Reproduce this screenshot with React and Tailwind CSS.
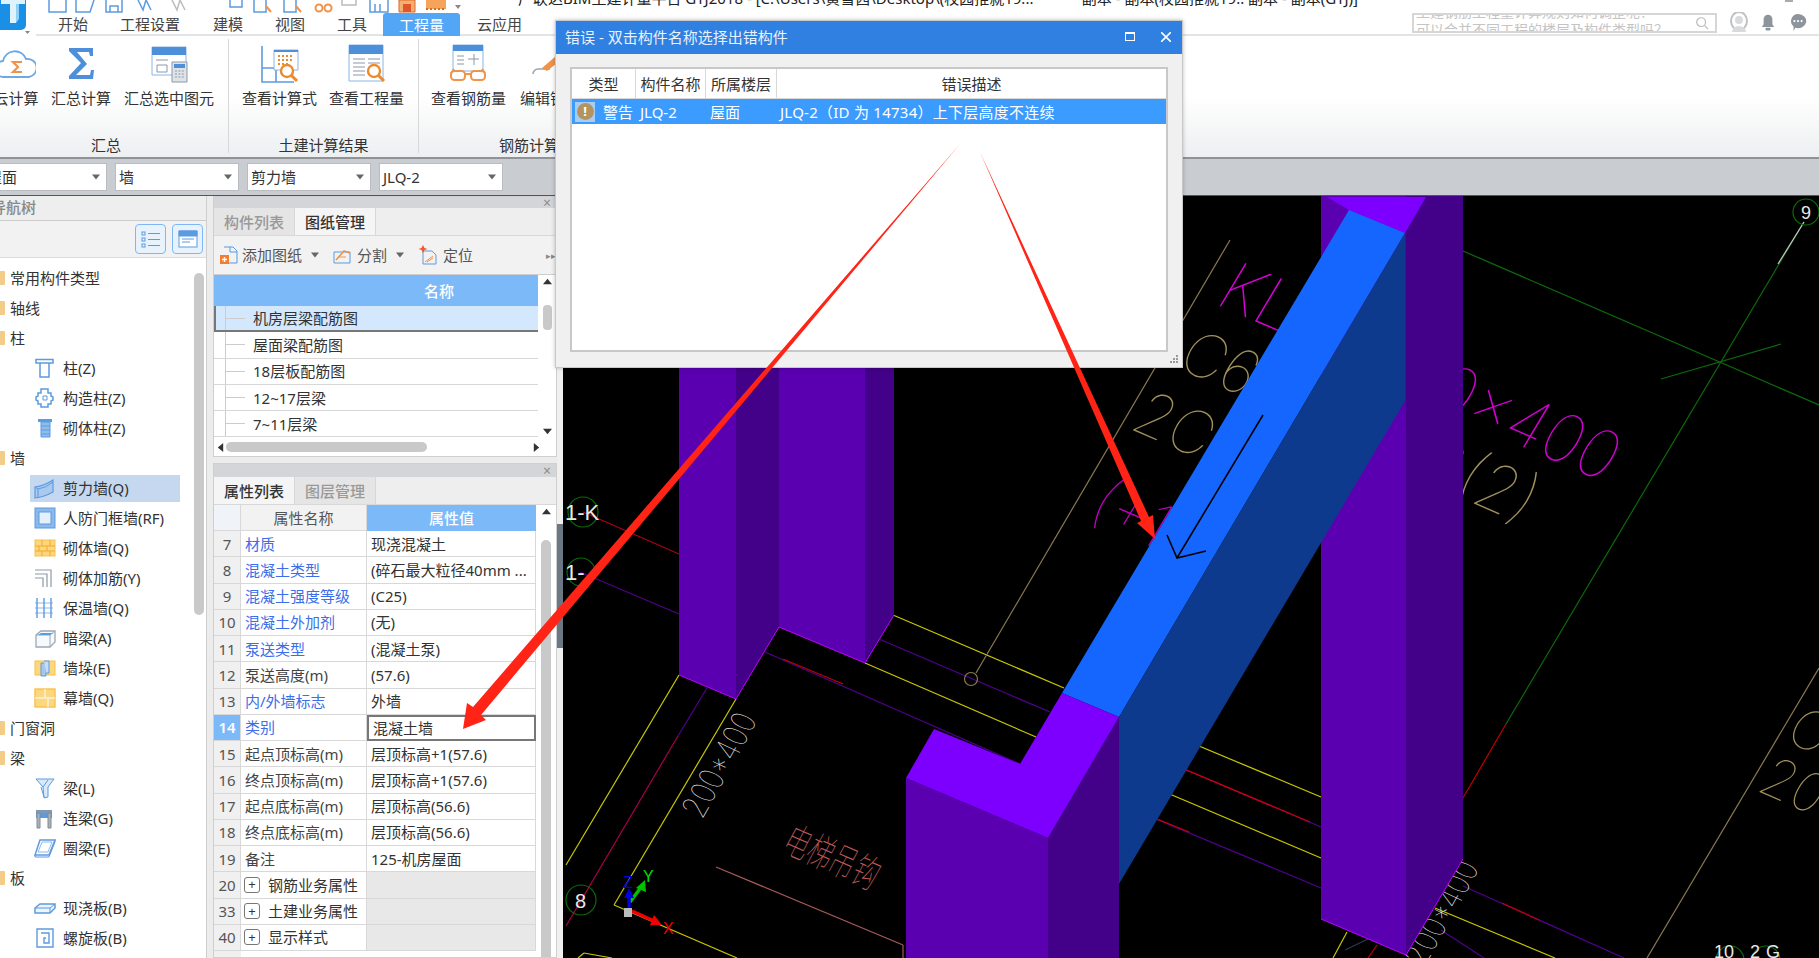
import React from 'react';

const Tri = ({ dir, className }) => {
  const pts = { up: '0,8 5,2 10,8', down: '0,2 5,8 10,2', left: '8,0 2,5 8,10', right: '2,0 8,5 2,10' };
  return (
    <svg viewBox="0 0 10 10" className={className}>
      <polygon points={pts[dir]} fill="currentColor" />
    </svg>
  );
};

const Caret = () => <Tri dir="down" className="w-[8px] h-[8px] text-[#666]" />;

const I = ({ children }) => (
  <svg viewBox="0 0 22 22" fill="none" className="w-[22px] h-[22px] shrink-0">
    {children}
  </svg>
);

const blue = '#5b9be0';
const amber = '#f8c14e';

const treeIcons = {
  zhu: (
    <I>
      <path d="M2 2.5h17v3.5H2zM6 6h9v14H6z" stroke={blue} strokeWidth="1.5" />
    </I>
  ),
  gouzao: (
    <I>
      <path d="M7 2h7v4h3v3l2 1v3l-2 1v3h-3v3H7v-3H4v-3l-2-1v-3l2-1V6h3z" stroke={blue} strokeWidth="1.5" />
      <path d="M9 9h4v4H9z" stroke={blue} />
    </I>
  ),
  qizhu: (
    <I>
      <path d="M4 2h14v3H4z" fill={blue} />
      <path d="M7 5h9v15H7z" fill="#8fbcec" stroke={blue} />
      <path d="M7 9h9M7 13h9M7 17h9" stroke={blue} />
    </I>
  ),
  jianli: (
    <I>
      <path d="M1 10 Q10 9 19 3v12Q10 20 1 21z" fill="#a9c9ee" stroke={blue} strokeWidth="1.2" />
      <path d="M1 10l3 2v9M4 12Q12 11 19 5" stroke={blue} />
    </I>
  ),
  renfang: (
    <I>
      <rect x="1" y="1" width="20" height="20" fill="#8db8ea" stroke={blue} />
      <rect x="5" y="5" width="12" height="12" fill="#e6f0fb" stroke={blue} />
    </I>
  ),
  qiqiang: (
    <I>
      <rect x="1" y="3" width="20" height="16" fill="#fdd77e" stroke={amber} />
      <path d="M1 9h20M1 14h20M8 3v6M16 3v6M5 9v5M13 9v5M8 14v5M16 14v5" stroke="#f3a92b" />
    </I>
  ),
  jiajin: (
    <I>
      <path d="M1 3h16v17M1 7h12v13M1 11h8v9" stroke="#8d99a6" strokeWidth="1.2" />
    </I>
  ),
  baowen: (
    <I>
      <path d="M3 1v20M10 1v20M17 1v20" stroke={blue} strokeWidth="1.4" />
      <path d="M1 6h18M1 11h18M1 16h18" stroke={blue} strokeWidth="0.7" />
    </I>
  ),
  anliang: (
    <I>
      <path d="M2 8l5-4h14v11l-5 5H2z" fill="#f7fafd" stroke="#9aa8b7" strokeWidth="1.3" />
      <path d="M2 8h14v12M16 8l5-4" stroke="#9aa8b7" />
      <path d="M7 6h12l-3 2H4z" fill={blue} />
    </I>
  ),
  duo: (
    <I>
      <rect x="1" y="4" width="20" height="14" fill="#fdd77e" stroke={amber} />
      <path d="M7 6h5v13H7z" fill="#a4c7ee" stroke={blue} />
      <path d="M10 4h5v12h-3" fill="#c6dcf4" stroke={blue} />
    </I>
  ),
  mu: (
    <I>
      <rect x="1" y="2" width="20" height="18" fill="#fdd77e" stroke={amber} strokeWidth="1.4" />
      <path d="M1 11h20M11 2v9M14 11v9" stroke="#f9f2dc" strokeWidth="1.4" />
    </I>
  ),
  liang: (
    <I>
      <path d="M2 2h18l-6 8v10l-4 1-1-11z" fill="#dbe8f8" stroke={blue} />
      <path d="M7 10l3 10M14 3L9 10" stroke={blue} />
    </I>
  ),
  lianliang: (
    <I>
      <path d="M2 3h16v3H2z" fill="#7f99b5" />
      <path d="M2 6h16v5H2z" fill={blue} />
      <path d="M3 6h3v15H3zM14 6h3v15h-3z" fill="#a8b3bd" stroke="#7f8a94" />
    </I>
  ),
  quan: (
    <I>
      <path d="M6 3h15l-6 15H1z" stroke={blue} strokeWidth="1.5" />
      <path d="M8 5h10l-4 10H4z" stroke={blue} strokeWidth="0.7" />
      <path d="M1 18v2h14l6-15V3" stroke={blue} />
    </I>
  ),
  xian: (
    <I>
      <path d="M1 11l5-4h15v4l-5 5H1z" fill="#edf4fc" stroke={blue} strokeWidth="1.5" />
      <path d="M1 11h15l5-4M16 11v5" stroke={blue} />
    </I>
  ),
  luo: (
    <I>
      <path d="M3 2h16v18H3zM7 6h8v10H10v-5h2" stroke={blue} strokeWidth="1.4" />
    </I>
  ),
};

const tree = [
  { t: '常用构件类型', p: 1 },
  { t: '轴线', p: 1 },
  { t: '柱', p: 1 },
  { t: '柱(Z)', i: 'zhu' },
  { t: '构造柱(Z)', i: 'gouzao' },
  { t: '砌体柱(Z)', i: 'qizhu' },
  { t: '墙', p: 1 },
  { t: '剪力墙(Q)', i: 'jianli', sel: 1 },
  { t: '人防门框墙(RF)', i: 'renfang' },
  { t: '砌体墙(Q)', i: 'qiqiang' },
  { t: '砌体加筋(Y)', i: 'jiajin' },
  { t: '保温墙(Q)', i: 'baowen' },
  { t: '暗梁(A)', i: 'anliang' },
  { t: '墙垛(E)', i: 'duo' },
  { t: '幕墙(Q)', i: 'mu' },
  { t: '门窗洞', p: 1 },
  { t: '梁', p: 1 },
  { t: '梁(L)', i: 'liang' },
  { t: '连梁(G)', i: 'lianliang' },
  { t: '圈梁(E)', i: 'quan' },
  { t: '板', p: 1 },
  { t: '现浇板(B)', i: 'xian' },
  { t: '螺旋板(B)', i: 'luo' },
];

const drawings = ['机房层梁配筋图', '屋面梁配筋图', '18层板配筋图', '12~17层梁', '7~11层梁'];

const props = [
  ['7', '材质', '现浇混凝土', 1],
  ['8', '混凝土类型', '(碎石最大粒径40mm ...', 1],
  ['9', '混凝土强度等级', '(C25)', 1],
  ['10', '混凝土外加剂', '(无)', 1],
  ['11', '泵送类型', '(混凝土泵)', 1],
  ['12', '泵送高度(m)', '(57.6)', 0],
  ['13', '内/外墙标志', '外墙', 1],
  ['14', '类别', '混凝土墙', 1],
  ['15', '起点顶标高(m)', '层顶标高+1(57.6)', 0],
  ['16', '终点顶标高(m)', '层顶标高+1(57.6)', 0],
  ['17', '起点底标高(m)', '层顶标高(56.6)', 0],
  ['18', '终点底标高(m)', '层顶标高(56.6)', 0],
  ['19', '备注', '125-机房屋面', 0],
];

const groups = [
  ['20', '钢筋业务属性'],
  ['33', '土建业务属性'],
  ['40', '显示样式'],
];

// ribbon icons
const RB = ({ children }) => (
  <svg viewBox="0 0 40 40" fill="none" className="w-[40px] h-[40px]">
    {children}
  </svg>
);

const Magnifier = () => (
  <g stroke="#ec8a2e" fill="#fff">
    <circle cx="27" cy="27" r="6" strokeWidth="2.4" />
    <path d="M31 31l6 6" strokeWidth="3" />
  </g>
);

const CloudIcon = () => (
  <RB>
    <path d="M8 33a8 8 0 0 1-1-16 12 12 0 0 1 23-2 9 9 0 0 1 3 18z" stroke="#6aa8e6" strokeWidth="1.8" />
    <path d="M26 18h-9l5 5-5 5h9" stroke="#f0934b" strokeWidth="2.2" />
  </RB>
);

const SigmaIcon = () => (
  <RB>
    <path d="M8 4h24v8h-3l-1-4H16l10 12-11 11h14l1-5h3l-1 9H8v-3l12-13L8 7z" fill="#4d8fd8" />
  </RB>
);

const SumSelIcon = () => (
  <RB>
    <path d="M3 3h34v28H3z" fill="#fff" stroke="#8bb5e6" />
    <path d="M3 3h34v8H3z" fill="#4d8fd8" />
    <path d="M7 16h12M8 21h10v7H8z" stroke="#8b98a6" />
    <path d="M23 18h15v20H23z" fill="#dfe3e8" stroke="#8b98a6" />
    <path d="M25 20h11v4H25z" fill="#4d8fd8" />
    <path d="M26 27h9M26 30h9M26 33h9" stroke="#8b98a6" strokeDasharray="2 1.4" />
  </RB>
);

const CalcFormulaIcon = () => (
  <RB>
    <path d="M2 2v36h32M2 24h14v14" stroke="#5b9be0" strokeWidth="1.6" />
    <path d="M14 6h24v20H14z" fill="#fff" stroke="#8bb5e6" />
    <path d="M14 6h24v2H14z" fill="#4d8fd8" />
    <path d="M18 12h16M18 16h16M18 20h12" stroke="#ec8a2e" strokeWidth="2" strokeDasharray="2 2" />
    <Magnifier />
  </RB>
);

const QuantityIcon = () => (
  <RB>
    <path d="M2 1h34v36H2z" fill="#fff" stroke="#8bb5e6" />
    <path d="M2 1h34v9H2z" fill="#4d8fd8" />
    <path d="M6 15h12M6 19h12M6 23h12M6 27h12M6 31h12M21 15h12M21 19h12" stroke="#8b98a6" />
    <Magnifier />
  </RB>
);

const RebarIcon = () => (
  <RB>
    <path d="M4 1h30v26H4z" fill="#fff" stroke="#8bb5e6" />
    <path d="M4 1h30v6H4z" fill="#4d8fd8" />
    <path d="M8 12h7M8 16h7M8 20h7M19 15h11M25 10v11" stroke="#8b98a6" />
    <rect x="2" y="27" width="14" height="9" rx="3.5" stroke="#f0934b" strokeWidth="2" />
    <rect x="22" y="27" width="14" height="9" rx="3.5" stroke="#f0934b" strokeWidth="2" />
    <path d="M16 30h6M2 29l3-4M36 29l-3-4" stroke="#f0934b" strokeWidth="2" />
  </RB>
);

const EditIcon = () => (
  <RB>
    <path d="M3 30a5 5 0 0 1 5-5h12" stroke="#9aa4ae" strokeWidth="1.5" />
    <path d="M12 24l14-12 5 4-14 11z" fill="#f0934b" />
  </RB>
);

const RibbonItem = ({ icon, label, className }) => (
  <div className={`flex flex-col items-center shrink-0 ${className}`}>
    <div className="h-[48px] flex items-center">{icon}</div>
    <span className="text-[15px] leading-[20px] text-[#333] whitespace-nowrap">{label}</span>
  </div>
);

const RibbonSep = () => <div className="w-px self-stretch bg-[#d6d8da] shrink-0 mt-[3px] mb-[4px]" />;

const Combo = ({ label, className }) => (
  <div className={`h-[28px] w-[124px] shrink-0 bg-white border border-[#b9bcc0] flex items-center justify-between pl-[3px] pr-[6px] ${className || ''}`}>
    <span className="text-[15px] leading-[20px] text-[#333]">{label}</span>
    <Caret />
  </div>
);

const PanelTop = ({ className }) => (
  <div className={`bg-[#d3d5d8] shrink-0 flex items-center justify-end pr-[5px] ${className}`}>
    <span className="text-[14px] leading-none text-[#8a8d90]">×</span>
  </div>
);

const PanelTab = ({ label, active }) => (
  <div
    className={`w-[81px] h-[27px] flex items-center justify-center text-[15px] leading-[20px] border-r border-[#d8d8d8] font-medium ${
      active ? 'bg-[#f5f5f5] text-[#333]' : 'bg-[#e5e5e5] text-[#999]'
    }`}
  >
    {label}
  </div>
);

const ToolIcon = ({ children }) => (
  <svg viewBox="0 0 20 20" fill="none" className="w-[20px] h-[20px] shrink-0">
    {children}
  </svg>
);

// CAD line work, in page coordinates
const cadLines = [
  ['#a80018', 583, 512, 679, 554],
  ['#50008f', 580, 572, 679, 614],
  ['#c8c800', 679, 675, 566, 865],
  ['#c8c800', 736, 699, 614, 905],
  ['#c8c800', 614, 905, 737, 958],
  ['#50008f', 707, 688, 678, 736],
  ['#a8004a', 678, 736, 566, 926],
  ['#50008f', 765, 652, 1020, 764],
  ['#c00000', 783, 659, 843, 684],
  ['#c8c800', 893, 615, 1064, 688],
  ['#c8c800', 865, 663, 1036, 737],
  ['#50008f', 879, 639, 1050, 712],
  ['#8a7a50', 1230, 240, 976, 673],
  ['#c8c800', 1120, 713, 1321, 797],
  ['#50008f', 1120, 742, 1321, 827],
  ['#d00000', 1120, 742, 1310, 822],
  ['#c8c800', 1120, 773, 1321, 858],
  ['#50008f', 1120, 804, 1321, 888],
  ['#d00000', 1120, 804, 1189, 832],
  ['#50008f', 1463, 886, 1624, 958],
  ['#c00000', 1502, 903, 1539, 920],
  ['#c8c800', 1435, 908, 1555, 958],
  ['#50008f', 1441, 930, 1484, 958],
  ['#c00000', 1506, 724, 1463, 798],
  ['#0b6b0b', 1506, 724, 1804, 222],
  ['#c8c8c8', 1804, 222, 1778, 264],
  ['#0b6b0b', 1463, 251, 1819, 405],
  ['#0b6b0b', 1661, 379, 1781, 344],
  ['#8a7a50', 1819, 668, 1647, 958],
  ['#c8c800', 1347, 932, 1333, 958],
  ['#c00000', 1377, 945, 1368, 958],
  ['#2a3a55', 1345, 950, 1370, 938],
  ['#a85a5a', 716, 867, 903, 945],
  ['#a85a5a', 903, 945, 903, 958],
  ['#c8c800', 578, 958, 584, 953],
  ['#c8c800', 584, 953, 612, 958],
];

const hexes = [
  [583, 512, 15],
  [581, 572, 14],
  [581, 900, 15],
  [1806, 212, 13],
  [1730, 960, 14],
  [1766, 960, 14],
];

const xText = 'matrix(0.92 0.4 -0.55 0.92 ';

const Canvas = () => (
  <svg viewBox="563 196 1256 762" className="block w-full h-full font-['Inter','Noto_Sans_CJK_SC',sans-serif]">
    {cadLines.map(([c, x1, y1, x2, y2], i) => (
      <line key={i} x1={x1} y1={y1} x2={x2} y2={y2} stroke={c} strokeWidth="1.2" />
    ))}
    {hexes.map(([x, y, r], i) => (
      <circle key={i} cx={x} cy={y} r={r} fill="none" stroke="#0b6b0b" strokeWidth="1.2" />
    ))}
    <circle cx="971" cy="679" r="6.5" fill="none" stroke="#8a7a50" strokeWidth="1.2" />

    <g fontWeight="100">
      <text transform={`${xText}1213 303)`} fontSize="64" fill="#d800d8">KL</text>
      <text transform={`${xText}1392 390)`} fontSize="64" fill="#d000d0">00x400</text>
      <text transform={`${xText}1415 478)`} fontSize="62" fill="#a0905a">2(2)</text>
      <text transform={`${xText}1175 367)`} fontSize="58" fill="#a0905a">C6</text>
      <text transform={`${xText}1128 428)`} fontSize="58" fill="#a0905a">2C</text>
      <text transform={`${xText}1085 518)`} fontSize="58" fill="#c000c0">(+1</text>
      <text transform={`${xText}1783 740)`} fontSize="52" fill="#a0905a">C</text>
      <text transform={`${xText}1755 790)`} fontSize="52" fill="#a0905a">20</text>
      <text transform="matrix(0.76 0.33 -0.62 1.15 780 850)" fontSize="30" fill="#b85a5a">电梯吊钩</text>
      <text transform="matrix(0.42 -0.75 0.95 0.45 702 820)" fontSize="32" fill="#ddd">200*400</text>
      <text transform="matrix(0.42 -0.75 0.95 0.45 1424 968)" fontSize="32" fill="#ddd">200*400</text>
    </g>
    <g fontFamily="Liberation Sans" fontSize="22" fill="#e8e8e8">
      <text x="565" y="520">1-K</text>
      <text x="565" y="580">1-</text>
      <text x="575" y="908" fontSize="20">8</text>
      <text x="1801" y="219" fontSize="18">9</text>
      <text x="1714" y="958" fontSize="18">10</text>
      <text x="1750" y="958" fontSize="18">2</text>
      <text x="1766" y="958" fontSize="18">G</text>
    </g>

    {/* left columns */}
    <polygon points="679,196 736,196 736,699 679,675" fill="#5a00b0" />
    <polygon points="736,196 779,196 779,627 736,699" fill="#430088" />
    <polygon points="779,196 865,196 865,663 779,627" fill="#5a00b0" />
    <polygon points="865,196 894,196 894,615 865,663" fill="#430088" />
    <polyline points="679,675 736,699 779,627 865,663 894,615" fill="none" stroke="#c000ff" strokeWidth="1" />

    {/* far column */}
    <polygon points="1321,196 1406,196 1406,955 1321,919" fill="#5a00b0" />
    <polygon points="1406,196 1463,196 1463,859 1406,955" fill="#430088" />
    <polyline points="1321,919 1406,955 1463,859" fill="none" stroke="#c000ff" strokeWidth="1" />
    <polygon points="1327,197 1426,197 1405,233 1349,210" fill="#7d00ff" />

    {/* beam */}
    <polygon points="1062,693 1119,717 1405,233 1349,210" fill="#1566ff" />
    <polygon points="1119,717 1405,233 1405,401 1119,884" fill="#0d3a8c" />
    <path d="M1263 415 L1177 558 M1167 535 L1177 558 L1206 551" fill="none" stroke="#000" strokeWidth="1.6" />

    {/* near column */}
    <polygon points="906,778 1048,838 1048,958 906,958" fill="#5a00b0" />
    <polygon points="1048,838 1119,717 1119,958 1048,958" fill="#430088" />
    <polygon points="906,778 934,729 1020,764 1062,693 1119,717 1048,838" fill="#7d00ff" />

    {/* axis widget */}
    <g strokeWidth="3.5" fill="none">
      <path d="M632 911l22 10" stroke="#f00000" />
      <path d="M630 902l12-16" stroke="#00c000" />
      <path d="M629 909v-16" stroke="#0000e0" />
    </g>
    <polygon points="654,915 662,925 650,925" fill="#f00000" />
    <polygon points="645,880 646,892 636,888" fill="#00c000" />
    <polygon points="629,888 634,898 624,898" fill="#0000e0" />
    <rect x="624" y="908" width="8" height="9" fill="#bbb" />
    <g fontFamily="Liberation Sans" fontSize="16">
      <text x="643" y="882" fill="#00e000">Y</text>
      <text x="623" y="888" fill="#0000e0">Z</text>
      <text x="663" y="934" fill="#f00000">X</text>
    </g>
  </svg>
);

const App = () => (
  <div className="relative w-[1819px] h-[958px] overflow-hidden bg-[#ececec] font-['Noto_Sans','Noto_Sans_CJK_SC',sans-serif] text-[#333]">
    {/* title + tabs */}
    <div className="h-[36px] flex bg-white">
      <div className="w-[36px] shrink-0 flex items-start">
        <svg viewBox="0 0 26 30" className="w-[26px] h-[30px] shrink-0">
          <rect x="-6" y="-6" width="32" height="36" rx="5" fill="#1a8fe6" />
          <path d="M1 0h24v4h-9v19h-6V4H1z" fill="#dff3ff" />
          <path d="M16 4h3v15l-3 4z" fill="#8fd0f8" />
        </svg>
        <Tri dir="down" className="w-[5px] h-[5px] text-[#888] mt-[30px] ml-[-1px]" />
      </div>
      <div className="flex-1 flex flex-col border-b-2 border-[#e3e4e5]">
        <div className="h-[13px] flex overflow-hidden items-end shrink-0">
          <svg viewBox="0 0 420 13" className="w-[420px] h-[13px] shrink-0 ml-[12px]" fill="none">
            <g stroke="#5b9be0" strokeWidth="1.5">
              <path d="M1 0v12h17V0" />
              <path d="M28 0v12h14l4-12" />
              <path d="M58 0v12h16V0M62 6h8v6h-8z" />
              <path d="M90 0l5 10 3-10 5 10" />
              <path d="M182 0v7h12V0" />
              <path d="M206 0v12h12V0" />
              <path d="M236 0v12h12V0" />
              <path d="M322 0v12h18V0M327 4v8M332 4v8" />
            </g>
            <g stroke="#bbb" strokeWidth="1.5">
              <path d="M124 0l5 10 3-10 5 10" />
              <path d="M294 0v5h14V0" />
            </g>
            <g fill="none" stroke="#f0934b" strokeWidth="2">
              <path d="M218 6l5 6M248 6l5 6" />
              <circle cx="271" cy="8" r="3.5" />
              <circle cx="280" cy="8" r="3.5" />
            </g>
            <path d="M351 0h16v12h-16z" fill="#f5b06f" stroke="#d9692a" />
            <path d="M355 4h8v8h-8z" fill="#e1552a" />
            <path d="M378 0h20v9h-20z" fill="#f5a45a" />
            <path d="M378 9h20" stroke="#d9692a" strokeWidth="2" strokeDasharray="2 2" />
            <polygon points="407,5 413,5 410,9" fill="#888" />
          </svg>
          <div className="ml-[50px] w-[840px] shrink-0 self-start -mt-[12px] flex justify-between text-[15px] leading-[20px] text-[#222] whitespace-nowrap">
            <span>广联达BIM土建计量平台 GTJ2018 - [C:\Users\黄雪茜\Desktop\(校园推就19...</span>
            <span>副本 - 副本(校园推就19..  副本 - 副本(GTJ)]</span>
          </div>
          <div className="ml-[427px] self-start w-[8px] h-[2px] bg-[#aaa]" />
        </div>
        <div className="flex-1 flex items-end text-[15px] leading-[20px] text-[#444] min-h-0">
          <span className="ml-[22px]">开始</span>
          <span className="ml-[32px]">工程设置</span>
          <span className="ml-[33px]">建模</span>
          <span className="ml-[32px]">视图</span>
          <span className="ml-[32px]">工具</span>
          <span className="ml-[16px] w-[77px] h-[23px] bg-[#53a5f6] rounded-t-[3px] text-white flex items-center justify-center -mb-[2px]">工程量</span>
          <span className="ml-[17px]">云应用</span>
          <div className="ml-[890px] w-[305px] h-[20px] mb-[1px] border-2 border-[#d5d6d8] relative overflow-hidden text-[14px] leading-[16px] text-[#c4c4c4] pl-[2px] shrink-0">
            <div className="-mt-[11px] whitespace-nowrap">土建钢筋工程量计算规则如何调整呢？</div>
            <div className="mt-[2px] whitespace-nowrap">可以合并不同工程的楼层及构件类型吗？</div>
            <svg viewBox="0 0 16 16" fill="none" className="absolute right-[6px] top-[1px] w-[14px] h-[14px]" stroke="#bbb" strokeWidth="1.4">
              <circle cx="7" cy="7" r="5" />
              <path d="M11 11l4 4" />
            </svg>
          </div>
          <svg viewBox="0 0 20 20" fill="none" className="ml-[12px] w-[20px] h-[20px] shrink-0 mb-[2px]">
            <ellipse cx="10" cy="9" rx="8" ry="9" stroke="#bfc1c4" strokeWidth="2" />
            <circle cx="10" cy="8" r="4" fill="#d9dadc" />
            <path d="M3 20a7 6 0 0 1 14 0z" fill="#d9dadc" />
          </svg>
          <svg viewBox="0 0 16 20" className="ml-[12px] w-[14px] h-[19px] shrink-0 mb-[2px]" fill="#8d949b">
            <path d="M8 1a5 5 0 0 1 5 5v6l2 3H1l2-3V6a5 5 0 0 1 5-5z" />
            <rect x="5" y="16" width="6" height="3" rx="1.5" />
          </svg>
          <svg viewBox="0 0 20 20" className="ml-[14px] w-[18px] h-[18px] shrink-0 mb-[3px]">
            <path d="M10 1a9 8 0 1 1-3 15.5L5 20v-5A8 8 0 0 1 10 1z" fill="#8d949b" />
            <circle cx="6" cy="9" r="1.2" fill="#fff" />
            <circle cx="10" cy="9" r="1.2" fill="#fff" />
            <circle cx="14" cy="9" r="1.2" fill="#fff" />
          </svg>
        </div>
      </div>
    </div>

    {/* ribbon */}
    <div className="h-[123px] flex border-b-2 border-[#8f9398] bg-gradient-to-b from-white from-50% to-[#edeff0]">
      <div className="w-[228px] shrink-0 flex flex-col overflow-hidden">
        <div className="flex pt-[4px] h-[99px] -ml-[7px]">
          <RibbonItem icon={<CloudIcon />} label="云计算" className="w-[46px]" />
          <RibbonItem icon={<SigmaIcon />} label="汇总计算" className="w-[60px] ml-[12px]" />
          <RibbonItem icon={<SumSelIcon />} label="汇总选中图元" className="w-[90px] ml-[13px]" />
        </div>
        <div className="text-center text-[15px] leading-[20px] text-[#333] w-[212px]">汇总</div>
      </div>
      <RibbonSep />
      <div className="w-[189px] shrink-0 flex flex-col">
        <div className="flex pt-[4px] h-[99px] pl-[13px]">
          <RibbonItem icon={<CalcFormulaIcon />} label="查看计算式" className="w-[75px]" />
          <RibbonItem icon={<QuantityIcon />} label="查看工程量" className="w-[75px] ml-[12px]" />
        </div>
        <div className="text-center text-[15px] leading-[20px] text-[#333]">土建计算结果</div>
      </div>
      <RibbonSep />
      <div className="flex-1 flex flex-col">
        <div className="flex pt-[4px] h-[99px] pl-[12px]">
          <RibbonItem icon={<RebarIcon />} label="查看钢筋量" className="w-[75px]" />
          <RibbonItem icon={<EditIcon />} label="编辑钢筋" className="w-[60px] ml-[14px]" />
        </div>
        <div className="pl-[80px] text-[15px] leading-[20px] text-[#333]">钢筋计算结果</div>
      </div>
    </div>

    {/* combo bar */}
    <div className="h-[37px] bg-[#c9ccd0] flex items-center gap-[8px] border-b border-[#555]">
      <Combo label="屋面" className="-ml-[17px]" />
      <Combo label="墙" />
      <Combo label="剪力墙" />
      <Combo label="JLQ-2" />
    </div>

    {/* main */}
    <div className="h-[762px] flex">
      {/* navigation tree */}
      <div className="w-[207px] shrink-0 bg-white border-r border-[#cfcfcf] flex flex-col overflow-hidden">
        <div className="h-[25px] shrink-0 bg-[#eee] border-b border-[#ccc] flex items-center pb-[3px] -ml-[9px] text-[15px] leading-[20px] font-medium text-[#888]">导航树</div>
        <div className="h-[37px] shrink-0 bg-[#f2f2f2] flex items-center gap-[6px] pl-[135px] border-b border-[#ddd]">
          <div className="w-[31px] h-[30px] rounded-[4px] border border-[#7db7f4] bg-[#e8f2fd] flex items-center justify-center">
            <svg viewBox="0 0 20 20" fill="none" className="w-[20px] h-[20px]" stroke="#5b9be0">
              <rect x="1" y="3" width="3" height="3" />
              <rect x="1" y="9" width="3" height="3" />
              <rect x="1" y="15" width="3" height="3" />
              <path d="M7 4.5h12M7 10.5h12M7 16.5h12" />
            </svg>
          </div>
          <div className="w-[31px] h-[30px] rounded-[4px] border border-[#7db7f4] bg-[#e8f2fd] flex items-center justify-center">
            <svg viewBox="0 0 20 20" fill="none" className="w-[20px] h-[20px]" stroke="#5b9be0">
              <rect x="1" y="2" width="18" height="16" fill="#fff" />
              <path d="M1 2h18v5H1z" fill="#5b9be0" />
              <path d="M4 10h12M4 13h8" />
            </svg>
          </div>
        </div>
        <div className="flex-1 min-h-0 flex overflow-hidden">
          <div className="w-[192px] shrink-0 pt-[5px]">
            {tree.map((row) =>
              row.p ? (
                <div key={row.t} className="h-[30px] flex items-center text-[15px] leading-[20px]">
                  <div className="w-[5px] h-[14px] bg-[#f3cd88] rounded-r-[1px] mr-[5px]" />
                  <span>{row.t}</span>
                </div>
              ) : (
                <div key={row.t} className="h-[30px] flex items-center text-[15px] leading-[20px]">
                  <div className={`ml-[30px] w-[150px] h-[27px] flex items-center pl-[4px] ${row.sel ? 'bg-[#c5d8ef]' : ''}`}>
                    {treeIcons[row.i]}
                    <span className="ml-[7px] whitespace-nowrap">{row.t}</span>
                  </div>
                </div>
              )
            )}
          </div>
          <div className="w-[10px] shrink-0 ml-[2px] mt-[15px] h-[342px] bg-[#c9c9c9] rounded-[5px]" />
        </div>
      </div>

      {/* component + property panels */}
      <div className="w-[344px] ml-[6px] shrink-0 flex flex-col">
        <div className="h-[261px] shrink-0 bg-white border border-[#cfcfcf] flex flex-col">
          <PanelTop className="h-[11px]" />
          <div className="h-[28px] shrink-0 bg-[#eee] flex border-b border-[#d8d8d8]">
            <PanelTab label="构件列表" />
            <PanelTab label="图纸管理" active />
          </div>
          <div className="h-[39px] shrink-0 bg-[#f2f2f2] flex items-center text-[15px] leading-[20px] text-[#555] border-b border-[#cfcfcf]">
            <div className="ml-[5px]">
              <ToolIcon>
                <path d="M5 2h9l4 4v12H9" stroke={blue} />
                <path d="M11 2v5h7" stroke={blue} />
                <rect x="1" y="10" width="9" height="9" fill="#f07f2e" />
                <path d="M5.5 12v5M3 14.5h5" stroke="#fff" strokeWidth="1.4" />
              </ToolIcon>
            </div>
            <span className="ml-[3px]">添加图纸</span>
            <div className="ml-[9px]"><Caret /></div>
            <div className="ml-[13px]">
              <ToolIcon>
                <path d="M2 18V7h16v11z" stroke={blue} />
                <path d="M4 15l8-9 6 2" stroke="#f0934b" strokeWidth="1.6" />
                <path d="M6 12h8" stroke="#f0934b" />
              </ToolIcon>
            </div>
            <span className="ml-[5px]">分割</span>
            <div className="ml-[9px]"><Caret /></div>
            <div className="ml-[14px]">
              <ToolIcon>
                <path d="M5 6h9l4 4v9H5z" stroke={blue} />
                <path d="M7 17l8-6M9 17l6-4" stroke="#f0934b" />
                <path d="M5 0l1.5 3 3 1-3 1L5 8 3.5 5l-3-1 3-1z" fill="#f05a28" />
              </ToolIcon>
            </div>
            <span className="ml-[5px]">定位</span>
            <span className="ml-[73px] text-[9px] leading-none text-[#888]">▸▸</span>
          </div>
          <div className="flex-1 min-h-0 flex">
            <div className="flex-1 min-w-0">
              <div className="h-[31px] bg-[#7cb9f8] text-white text-[15px] leading-[20px] font-medium flex items-center justify-center pl-[126px]">名称</div>
              {drawings.map((d, i) => (
                <div
                  key={d}
                  className={`h-[26.3px] flex items-center text-[15px] leading-[20px] border-b ${
                    i === 0 ? 'bg-[#d4e8fd] border-b-2 border-l-2 border-[#777]' : 'border-[#d8d8d8]'
                  }`}
                >
                  <div className={`h-full border-l border-[#ccc] flex items-center ${i === 0 ? 'ml-[9px] w-[20px]' : 'ml-[11px] w-[20px]'}`}>
                    <div className="w-full h-px bg-[#ccc]" />
                  </div>
                  <span className="ml-[8px]">{d}</span>
                </div>
              ))}
            </div>
            <div className="w-[18px] shrink-0 flex flex-col items-center">
              <Tri dir="up" className="w-[9px] h-[9px] mt-[2px] text-[#333]" />
              <div className="w-[9px] h-[25px] bg-[#c9c9c9] rounded-[4px] mt-[19px]" />
              <Tri dir="down" className="w-[9px] h-[9px] mt-[97px] text-[#333]" />
            </div>
          </div>
          <div className="h-[18px] shrink-0 flex items-center bg-white">
            <Tri dir="left" className="w-[9px] h-[9px] ml-[2px] text-[#333]" />
            <div className="w-[201px] h-[10px] bg-[#c9c9c9] rounded-[5px] ml-[1px]" />
            <Tri dir="right" className="w-[9px] h-[9px] ml-[105px] text-[#333]" />
          </div>
        </div>

        <div className="mt-[6px] flex-1 min-h-0 bg-white border border-[#cfcfcf] flex flex-col overflow-hidden">
          <PanelTop className="h-[13px]" />
          <div className="h-[28px] shrink-0 bg-[#eee] flex border-b border-[#d8d8d8]">
            <PanelTab label="属性列表" active />
            <PanelTab label="图层管理" />
          </div>
          <div className="flex-1 min-h-0 flex">
            <div className="w-[322px] shrink-0 text-[15px] leading-[20px]">
              <div className="h-[26px] flex">
                <div className="w-[27px] bg-[#f0f3f7] border-r border-b border-[#d8d8d8]" />
                <div className="w-[126px] bg-[#f2f2f2] border-r border-b border-[#d8d8d8] flex items-center justify-center text-[#555]">属性名称</div>
                <div className="w-[169px] bg-[#7cb9f8] text-white font-medium flex items-center justify-center">属性值</div>
              </div>
              {props.map(([n, name, val, link]) => (
                <div key={n} className="h-[26.25px] flex">
                  <div className={`w-[27px] shrink-0 flex items-center justify-center border-r border-b border-[#d8d8d8] ${n === '14' ? 'bg-[#7cb9f8] text-white font-semibold' : 'bg-[#f0f0f0] text-[#555]'}`}>{n}</div>
                  <div className={`w-[126px] shrink-0 px-[4px] flex items-center whitespace-nowrap border-r border-b border-[#d8d8d8] ${link ? 'text-[#3b6ee8]' : 'text-[#444]'}`}>{name}</div>
                  <div className={`w-[169px] shrink-0 px-[4px] flex items-center whitespace-nowrap ${n === '14' ? 'border-2 border-[#777]' : 'border-b border-r border-[#d8d8d8]'}`}>{val}</div>
                </div>
              ))}
              {groups.map(([n, name]) => (
                <div key={n} className="h-[26.25px] flex">
                  <div className="w-[27px] shrink-0 bg-[#f0f0f0] text-[#555] flex items-center justify-center border-r border-b border-[#d8d8d8]">{n}</div>
                  <div className="w-[126px] shrink-0 pl-[3px] flex items-center whitespace-nowrap border-r border-b border-[#d8d8d8]">
                    <div className="w-[16px] h-[16px] shrink-0 border border-[#777] rounded-[3px] flex items-center justify-center text-[13px] leading-none">+</div>
                    <span className="ml-[8px]">{name}</span>
                  </div>
                  <div className="w-[169px] shrink-0 bg-[#e8e8e8] border-b border-r border-[#d8d8d8]" />
                </div>
              ))}
              <div className="h-[8px] w-[27px] bg-[#f0f0f0]" />
            </div>
            <div className="w-[20px] shrink-0 flex flex-col items-center">
              <Tri dir="up" className="w-[9px] h-[9px] mt-[2px] text-[#333]" />
              <div className="w-[10px] flex-1 bg-[#c9c9c9] rounded-t-[5px] mt-[24px]" />
            </div>
          </div>
        </div>
      </div>

      {/* splitter */}
      <div className="w-[6px] shrink-0 bg-[#f0f0f0]">
        <div className="mt-[328px] h-[124px] bg-[#6b7883]" />
      </div>

      <div className="flex-1 min-w-0 bg-black overflow-hidden">
        <Canvas />
      </div>
    </div>

    {/* error dialog */}
    <div className="absolute left-[555px] top-[20px] w-[628px] h-[348px] bg-[#f0f0f0] border border-[#c8c8c8] flex flex-col shadow-[0_0_4px_rgba(0,0,0,0.25)]">
      <div className="h-[33px] shrink-0 bg-[#2f80e0] text-[#e8f2ff] flex items-center pl-[9px] pr-[11px] pb-[2px] text-[15px] leading-[20px]">
        <span className="flex-1">错误 - 双击构件名称选择出错构件</span>
        <div className="w-[10px] h-[9px] border border-white border-t-2 mr-[26px]" />
        <svg viewBox="0 0 10 10" className="w-[10px] h-[10px]" stroke="#fff" strokeWidth="1.6">
          <path d="M0 0l10 10M10 0L0 10" />
        </svg>
      </div>
      <div className="mt-[13px] mx-[14px] flex-1 mb-[15px] bg-white border-2 border-[#c8c8c8] text-[15px] leading-[20px]">
        <div className="h-[30px] flex border-b border-[#d8d8d8] text-[#333]">
          <div className="w-[64px] border-r border-[#d8d8d8] flex items-center justify-center">类型</div>
          <div className="w-[70px] border-r border-[#d8d8d8] flex items-center justify-center whitespace-nowrap">构件名称</div>
          <div className="w-[71px] border-r border-[#d8d8d8] flex items-center justify-center whitespace-nowrap">所属楼层</div>
          <div className="flex-1 flex items-center justify-center">错误描述</div>
        </div>
        <div className="h-[25px] flex items-center bg-[#3c9bff] text-white whitespace-nowrap">
          <div className="ml-[3px] w-[20px] h-[20px] bg-[#a8cdf5] flex items-center justify-center shrink-0">
            <div className="w-[17px] h-[17px] rounded-full bg-[#b5935f] text-white text-[13px] leading-none font-bold flex items-center justify-center">!</div>
          </div>
          <span className="ml-[8px] w-[37px] shrink-0">警告</span>
          <span className="w-[70px] shrink-0">JLQ-2</span>
          <span className="w-[70px] shrink-0">屋面</span>
          <span className="tracking-[0.25px]">JLQ-2（ID 为 14734）上下层高度不连续</span>
        </div>
      </div>
      <svg viewBox="0 0 10 10" className="absolute right-[3px] bottom-[3px] w-[10px] h-[10px]" fill="#999">
        <rect x="7" y="1" width="2" height="2" />
        <rect x="4" y="4" width="2" height="2" />
        <rect x="7" y="4" width="2" height="2" />
        <rect x="1" y="7" width="2" height="2" />
        <rect x="4" y="7" width="2" height="2" />
        <rect x="7" y="7" width="2" height="2" />
      </svg>
    </div>

    {/* red annotation arrows */}
    <svg viewBox="0 0 1819 958" className="absolute inset-0 w-[1819px] h-[958px] pointer-events-none">
      <polygon points="960,144 481,715 486,720 463,729 467,703 473,707" fill="#ff2415" />
      <polygon points="980,152 1149,517 1153,515 1155,539 1137,523 1141,521" fill="#ff2415" />
    </svg>
  </div>
);

export default App;
